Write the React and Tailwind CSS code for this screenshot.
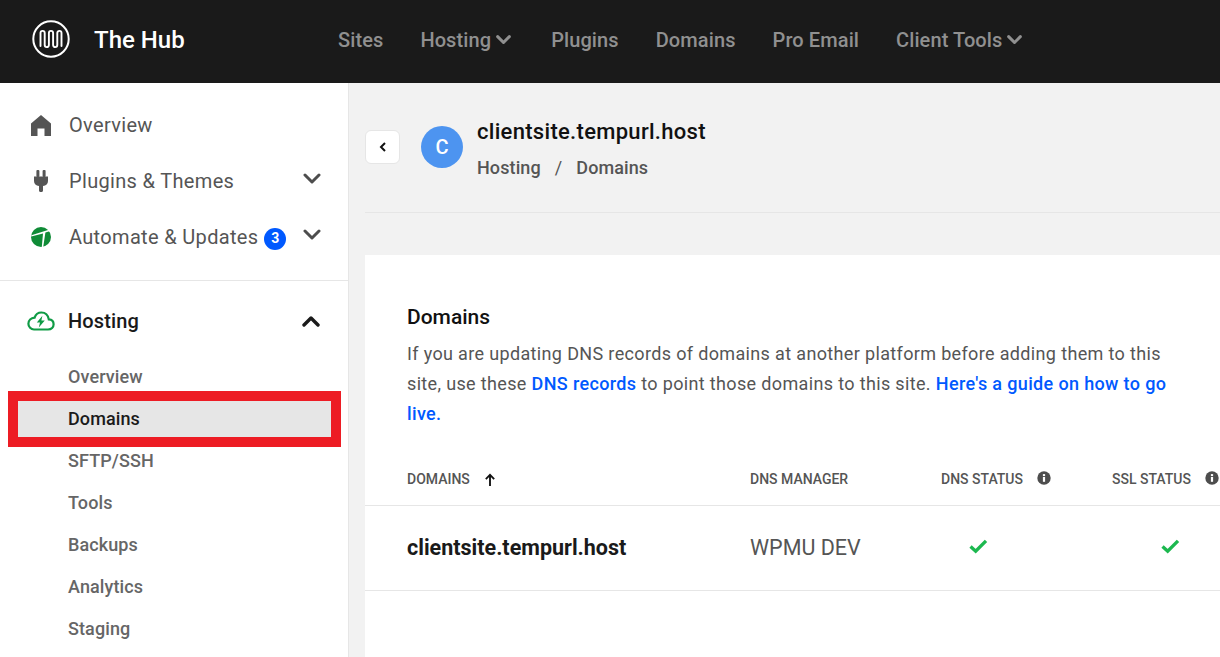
import React from "react";

const Chevron = ({ up, className, sw = 3 }) => (
  <svg viewBox="0 0 18 12" className={className} fill="none" stroke="currentColor" strokeWidth={sw} strokeLinecap="round" strokeLinejoin="round">
    <path d={up ? "M2 10 L9 3 L16 10" : "M2 2 L9 9 L16 2"} />
  </svg>
);

const Info = () => (
  <svg viewBox="0 0 14 14" className="h-[14px] w-[14px]">
    <circle cx="7" cy="7" r="6.7" fill="#4d4d4d" />
    <rect x="5.9" y="6" width="2.2" height="4.8" fill="#fff" />
    <rect x="5.9" y="3.1" width="2.2" height="2" fill="#fff" />
  </svg>
);

const Check = () => (
  <svg viewBox="0 0 20 16" className="h-[15px] w-[19px]" fill="none" stroke="#1cb84f" strokeWidth="3.6">
    <path d="M1.5 8 L7 13 L18 2" />
  </svg>
);

const Logo = () => (
  <svg viewBox="0 0 38 38" className="h-[38px] w-[38px]" fill="none" stroke="#fff">
    <circle cx="19" cy="19" r="17.7" strokeWidth="2" />
    <path
      d="M8.5 26V13a2.1 2.1 0 0 1 4.2 0V25a2.1 2.1 0 0 0 4.2 0V13a2.1 2.1 0 0 1 4.2 0V25a2.1 2.1 0 0 0 4.2 0V13a2.1 2.1 0 0 1 4.2 0V26"
      strokeWidth="1.9"
      strokeLinecap="round"
    />
  </svg>
);

const Home = () => (
  <svg viewBox="0 0 20 21" className="h-[21px] w-[20px]" fill="#555">
    <path d="M10 0 L20 8.5 V21 H13.5 V13.5 H6.5 V21 H0 V8.5 Z" />
  </svg>
);

const Plug = () => (
  <svg viewBox="0 0 14 22" className="h-[22px] w-[14px]" fill="#555">
    <rect x="2.4" y="0" width="3" height="7" rx="1" />
    <rect x="8.6" y="0" width="3" height="7" rx="1" />
    <path d="M0 6.5 H14 V11 C14 14 12 15.8 9 16 V20.5 C9 21.5 8 22 7 22 C6 22 5 21.5 5 20.5 V16 C2 15.8 0 14 0 11 Z" />
  </svg>
);

const Automate = () => (
  <svg viewBox="0 0 20 20" className="h-[20px] w-[20px]">
    <circle cx="10" cy="10" r="10" fill="#0f8b36" />
    <path d="M0.4 8.2 L18.6 2.6 L19.4 4 L14.4 5.4 L12.2 20 L10.8 20 L12 6.4 L0.2 9.6 Z" fill="#fff" />
  </svg>
);

const Cloud = () => (
  <svg viewBox="0 0 28 20" className="h-[20px] w-[28px]" fill="none">
    <path d="M7 18.5 H21 C24.5 18.5 26.6 16 26.6 13.3 C26.6 10.5 24.5 8.6 21.8 8.4 C21 4 18 1.5 14.4 1.5 C11 1.5 8.6 3.6 7.6 6.6 C4 6.8 1.4 9.4 1.4 12.7 C1.4 16 4 18.5 7 18.5 Z" stroke="#0f9b45" strokeWidth="2.2" />
    <path d="M15.4 4.8 L9.8 11.6 H13 L11.8 16.4 L17.8 9.4 H14.4 Z" fill="#0f9b45" />
  </svg>
);

const MainItem = ({ icon, label, badge, chevron }) => (
  <div className="flex h-[56px] items-center pl-[31px] pr-[27px] text-[20px] tracking-[0.33px] text-[#555]">
    <span className="flex w-[38px] justify-start">{icon}</span>
    <span className="flex-1 whitespace-nowrap">
      {label}
      {badge && (
        <span className="ml-[6px] inline-flex h-[22px] w-[22px] items-center justify-center rounded-full bg-[#0059ff] align-[1px] text-[14px] font-bold text-white">
          {badge}
        </span>
      )}
    </span>
    {chevron && <Chevron className="mb-[4px] h-[12px] w-[18px] text-[#4d4d4d]" />}
  </div>
);

const SubItem = ({ label }) => (
  <div className="flex h-[42px] items-center pl-[68px] text-[18px] font-medium tracking-[0.1px] text-[#666]">{label}</div>
);

const NavItem = ({ label, chevron }) => (
  <span className="flex items-center gap-[5px] whitespace-nowrap">
    {label}
    {chevron && <Chevron sw={3.6} className="mr-[3px] h-[10px] w-[15px]" />}
  </span>
);

export default function App() {
  return (
    <div className="flex h-[657px] w-[1220px] flex-col overflow-hidden bg-white font-['Roboto',sans-serif]">
      <header className="flex h-[83px] shrink-0 items-center bg-[#1a1a1a] pb-[5px] pl-[32px]">
        <Logo />
        <span className="ml-[24px] w-[244px] pt-[2px] text-[24px] font-medium text-white">The Hub</span>
        <nav className="flex gap-[37px] pt-[2px] text-[20px] font-medium tracking-[0.1px] text-[#909090]">
          <NavItem label="Sites" />
          <NavItem label="Hosting" chevron />
          <NavItem label="Plugins" />
          <NavItem label="Domains" />
          <NavItem label="Pro Email" />
          <NavItem label="Client Tools" chevron />
        </nav>
      </header>

      <div className="flex min-h-0 flex-1">
        <aside className="w-[349px] shrink-0 border-r border-[#e6e6e6] bg-white">
          <div className="border-b border-[#e6e6e6] pb-[15px] pt-[14px]">
            <MainItem icon={<Home />} label="Overview" />
            <MainItem icon={<span className="pl-[3px]"><Plug /></span>} label="Plugins & Themes" chevron />
            <MainItem icon={<Automate />} label="Automate & Updates" badge="3" chevron />
          </div>
          <div className="mt-[12px] flex h-[56px] items-center pl-[27px] pr-[28px] text-[20px] font-medium tracking-[0.15px] text-[#1a1a1a]">
            <span className="w-[41px]"><Cloud /></span>
            <span className="flex-1">Hosting</span>
            <Chevron up sw={3.4} className="h-[12px] w-[18px] text-[#1a1a1a]" />
          </div>
          <div className="mt-[6px]">
            <SubItem label="Overview" />
            <div className="relative flex h-[42px] items-center pl-[68px] text-[18px] font-medium tracking-[0.1px] text-[#1a1a1a]">
              <div className="absolute left-[8px] top-[-6px] h-[56px] w-[333px] border-[10px] border-[#ed1c24] bg-[#e6e6e6]" />
              <span className="relative">Domains</span>
            </div>
            <SubItem label="SFTP/SSH" />
            <SubItem label="Tools" />
            <SubItem label="Backups" />
            <SubItem label="Analytics" />
            <SubItem label="Staging" />
          </div>
        </aside>

        <main className="min-w-0 flex-1 bg-[#f2f2f2] pl-[16px]">
          <div className="flex h-[130px] items-start border-b border-[#e6e6e6] pt-[43px]">
            <button className="mt-[4px] flex h-[34px] w-[35px] items-center justify-center rounded-[6px] border border-[#e6e6e6] bg-white">
              <svg viewBox="0 0 8 10" className="h-[10px] w-[8px]" fill="none" stroke="#111" strokeWidth="2">
                <path d="M6 1 L2 5 L6 9" />
              </svg>
            </button>
            <div className="ml-[21px] flex h-[42px] w-[42px] items-center justify-center rounded-full bg-[#4d94f0] text-[20px] font-medium text-white">C</div>
            <div className="ml-[14px] mt-[-9px]">
              <div className="text-[22px] font-medium leading-[30px] tracking-[0.3px] text-[#111]">clientsite.tempurl.host</div>
              <div className="mt-[7px] flex text-[18px] font-medium leading-[28px] tracking-[0.1px] text-[#555]">
                <span>Hosting</span>
                <span className="mx-[14px] font-normal">/</span>
                <span>Domains</span>
              </div>
            </div>
          </div>

          <section className="mt-[42px] h-[500px] bg-white pt-[48px]">
            <div className="pl-[42px] pr-[40px]">
              <h2 className="text-[21px] font-medium leading-[28px] text-[#111]">Domains</h2>
              <p className="mt-[8px] text-[18px] leading-[30px] tracking-[0.35px] text-[#555]">
                If you are updating DNS records of domains at another platform before adding them to this site, use these{" "}
                <a className="font-medium text-[#0059ff]">DNS records</a> to point those domains to this site.{" "}
                <a className="font-medium text-[#0059ff]">Here's a guide on how to go live.</a>
              </p>
            </div>
            <div className="mt-[27px] grid h-[50px] grid-cols-[385px_191px_171px_1fr] items-center border-b border-[#e6e6e6] pb-[3px] text-[14px] font-medium text-[#555]">
              <span className="flex items-center gap-[14px] pl-[42px]">
                DOMAINS
                <svg viewBox="0 0 12 14" className="h-[13px] w-[12px]" fill="none" stroke="#111" strokeWidth="2">
                  <path d="M6 14 V2 M1.5 6.5 L6 2 L10.5 6.5" />
                </svg>
              </span>
              <span>DNS MANAGER</span>
              <span className="flex items-center gap-[14px]">
                DNS STATUS
                <span className="mb-[3px]"><Info /></span>
              </span>
              <span className="flex items-center gap-[14px] whitespace-nowrap">
                SSL STATUS
                <span className="mb-[3px]"><Info /></span>
              </span>
            </div>
            <div className="grid h-[85px] grid-cols-[385px_191px_171px_1fr] items-center border-b border-[#e6e6e6] text-[21.5px]">
              <span className="pl-[42px] font-bold text-[#1a1a1a]">clientsite.tempurl.host</span>
              <span className="text-[#555]">WPMU DEV</span>
              <span className="mb-[4px] pl-[28px]"><Check /></span>
              <span className="mb-[4px] pl-[49px]"><Check /></span>
            </div>
          </section>
        </main>
      </div>
    </div>
  );
}
